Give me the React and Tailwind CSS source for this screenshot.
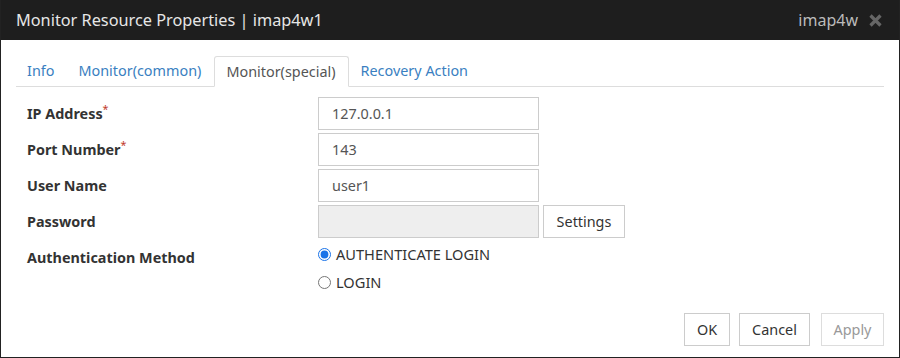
import { useState } from "react";

const rowLabel = "text-[14.4px] font-bold text-[#333]";

const App = () => {
  const [auth, setAuth] = useState("authlogin");

  return (
    <div className="w-[900px] h-[358px] bg-[#222] px-px pb-px font-['Noto_Sans','Liberation_Sans',sans-serif] flex flex-col">
      <div className="h-[40px] bg-[#1e1e1e] flex items-center justify-between pl-[15px] pr-[17px] shrink-0">
        <span className="text-[16.3px] text-[#e6e6e6]">
          Monitor Resource Properties | imap4w1
        </span>
        <div className="flex items-center gap-[11px]">
          <span className="text-[16px] text-[#bbb]">imap4w</span>
          <svg width="13" height="13" viewBox="0 0 13 13">
            <path d="M1.5 1.5 L11.5 11.5 M11.5 1.5 L1.5 11.5" stroke="#666" strokeWidth="3.2" />
          </svg>
        </div>
      </div>

      <div className="flex-1 bg-white flex flex-col px-[15px]">
        <div className="mt-[16px] h-[31px] border-b border-[#ddd] flex items-end text-[14.4px]">
          <div className="pl-[11px] pr-[12px] h-[30px] flex items-center text-[#3a7fc1]">Info</div>
          <div className="px-[12px] h-[30px] flex items-center text-[#3a7fc1]">Monitor(common)</div>
          <div className="ml-[1px] pl-[11px] pr-[12px] h-[31px] -mb-px flex items-center text-[#555] bg-white border border-[#ddd] border-b-white rounded-t-[3px]">
            Monitor(special)
          </div>
          <div className="px-[12px] h-[30px] flex items-center text-[#3a7fc1]">Recovery Action</div>
        </div>

        <div className="mt-[10px] flex flex-col gap-[3px] pl-[11px]">
          <div className="flex items-center h-[33px]">
            <div className={`w-[291px] ${rowLabel}`}>
              IP Address<sup className="text-[#c0392b] font-normal">*</sup>
            </div>
            <input
              defaultValue="127.0.0.1"
              className="w-[221px] h-[33px] border border-[#ccc] px-[13px] text-[14.4px] text-[#555] outline-none"
            />
          </div>
          <div className="flex items-center h-[33px]">
            <div className={`w-[291px] ${rowLabel}`}>
              Port Number<sup className="text-[#c0392b] font-normal">*</sup>
            </div>
            <input
              defaultValue="143"
              className="w-[221px] h-[33px] border border-[#ccc] px-[13px] text-[14.4px] text-[#555] outline-none"
            />
          </div>
          <div className="flex items-center h-[33px]">
            <div className={`w-[291px] ${rowLabel}`}>User Name</div>
            <input
              defaultValue="user1"
              className="w-[221px] h-[33px] border border-[#ccc] px-[13px] text-[14.4px] text-[#555] outline-none"
            />
          </div>
          <div className="flex items-center h-[33px]">
            <div className={`w-[291px] ${rowLabel}`}>Password</div>
            <input
              disabled
              className="w-[221px] h-[33px] border border-[#ccc] bg-[#eee] outline-none"
            />
            <button className="ml-[4px] w-[82px] h-[33px] border border-[#ccc] text-[14.4px] text-[#333] bg-white">
              Settings
            </button>
          </div>
          <div className="flex h-[54px] pt-[3px]">
            <div className={`w-[291px] pt-[3px] ${rowLabel}`}>Authentication Method</div>
            <div className="flex flex-col gap-[7px] text-[14.6px] text-[#333]">
              <label className="flex items-center gap-[5px] h-[21px]">
                <input
                  type="radio"
                  name="auth"
                  checked={auth === "authlogin"}
                  onChange={() => setAuth("authlogin")}
                  className="m-0 w-[13px] h-[13px] accent-[#1a73e8]"
                />
                AUTHENTICATE LOGIN
              </label>
              <label className="flex items-center gap-[5px] h-[21px]">
                <input
                  type="radio"
                  name="auth"
                  checked={auth === "login"}
                  onChange={() => setAuth("login")}
                  className="m-0 w-[13px] h-[13px]"
                />
                LOGIN
              </label>
            </div>
          </div>
        </div>

        <div className="mt-auto mb-[11px] flex justify-end text-[14.4px]">
          <button className="w-[46px] h-[33px] border border-[#ccc] text-[#333] bg-white">OK</button>
          <button className="ml-[9px] w-[71px] h-[33px] border border-[#ccc] text-[#333] bg-white">Cancel</button>
          <button className="ml-[11px] w-[63px] h-[33px] border border-[#ddd] text-[#999] bg-white">Apply</button>
        </div>
      </div>
    </div>
  );
};

export default App;
